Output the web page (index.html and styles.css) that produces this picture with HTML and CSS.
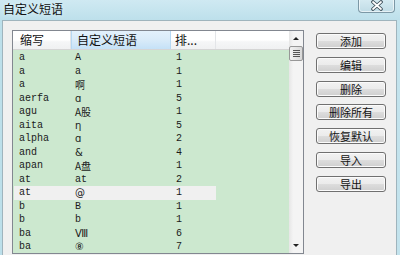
FILE: index.html
```html
<!DOCTYPE html>
<html lang="zh">
<head>
<meta charset="utf-8">
<title>自定义短语</title>
<link rel="stylesheet" href="styles.css">
</head>
<body>
<div class="window">
  <div class="titlebar">
    <span class="title">自定义短语</span>
    <div class="close">
      <svg width="14" height="11" viewBox="0 0 14 11">
        <path d="M3 2 L11 9 M11 2 L3 9" stroke="#3a4a55" stroke-width="3.6" stroke-linecap="round"/>
        <path d="M3 2 L11 9 M11 2 L3 9" stroke="#ffffff" stroke-width="1.8" stroke-linecap="round"/>
      </svg>
    </div>
  </div>
  <div class="body">
    <div class="list">
      <div class="table">
        <div class="header">
          <div class="hcell c1">缩写</div>
          <div class="hcell c2 hover">自定义短语</div>
          <div class="hcell c3">排...</div>
          <div class="hcell rest"></div>
        </div>
        <div class="rows">
          <div class="row"><span class="c1">a</span><span class="c2">A</span><span class="c3">1</span></div>
          <div class="row"><span class="c1">a</span><span class="c2">a</span><span class="c3">1</span></div>
          <div class="row"><span class="c1">a</span><span class="c2 cjk">啊</span><span class="c3">1</span></div>
          <div class="row"><span class="c1">aerfa</span><span class="c2 sym">ɑ</span><span class="c3">5</span></div>
          <div class="row"><span class="c1">agu</span><span class="c2 cjk">A股</span><span class="c3">1</span></div>
          <div class="row"><span class="c1">aita</span><span class="c2 sym">η</span><span class="c3">5</span></div>
          <div class="row"><span class="c1">alpha</span><span class="c2 sym">ɑ</span><span class="c3">2</span></div>
          <div class="row"><span class="c1">and</span><span class="c2 sym">&amp;</span><span class="c3">4</span></div>
          <div class="row"><span class="c1">apan</span><span class="c2 cjk">A盘</span><span class="c3">1</span></div>
          <div class="row"><span class="c1">at</span><span class="c2">at</span><span class="c3">2</span></div>
          <div class="row selected"><span class="c1">at</span><span class="c2 sym">@</span><span class="c3">1</span></div>
          <div class="row"><span class="c1">b</span><span class="c2">B</span><span class="c3">1</span></div>
          <div class="row"><span class="c1">b</span><span class="c2">b</span><span class="c3">1</span></div>
          <div class="row"><span class="c1">ba</span><span class="c2 sym">Ⅷ</span><span class="c3">6</span></div>
          <div class="row"><span class="c1">ba</span><span class="c2 sym">⑧</span><span class="c3">7</span></div>
        </div>
      </div>
      <div class="scrollbar">
        <div class="sbtn"><span class="arrow up"></span></div>
        <div class="track">
          <div class="thumb"><i></i><i></i><i></i><i></i></div>
        </div>
        <div class="sbtn"><span class="arrow down"></span></div>
      </div>
    </div>
    <div class="buttons">
      <button class="btn">添加</button>
      <button class="btn">编辑</button>
      <button class="btn">删除</button>
      <button class="btn">删除所有</button>
      <button class="btn">恢复默认</button>
      <button class="btn">导入</button>
      <button class="btn">导出</button>
    </div>
  </div>
</div>
</body>
</html>
```
FILE: styles.css
```css
html, body {
  margin: 0;
  padding: 0;
  width: 400px;
  height: 255px;
  overflow: hidden;
  background: #c4e2ec;
}
.window {
  width: 400px;
  height: 255px;
  display: flex;
  flex-direction: column;
  font-family: "Noto Sans CJK SC", "Liberation Sans", sans-serif;
  background: linear-gradient(90deg, #bcdfea 0%, #cde8f1 40%, #c3e3ed 100%);
}
.titlebar {
  height: 20px;
  flex: none;
  display: flex;
  align-items: flex-start;
  justify-content: space-between;
  background: linear-gradient(180deg, #cfe9f2 0%, #bde0eb 100%);
}
.title {
  font-size: 12px;
  line-height: 12px;
  margin: 3px 0 0 3px;
  color: #111;
  text-shadow: 0 0 4px #e8f6fb;
}
.close {
  width: 37px;
  height: 14px;
  margin: -1px 5px 0 0;
  box-sizing: border-box;
  border: 1px solid #7c98a6;
  border-top: none;
  border-radius: 0 0 4px 4px;
  background: linear-gradient(180deg, #d6ebf2 0%, #c0dce6 100%);
  display: flex;
  align-items: center;
  justify-content: center;
  box-shadow: inset 0 0 0 1px rgba(255,255,255,0.6);
}
.body {
  flex: 1;
  margin-left: 2px;
  margin-right: 3px;
  border-left: 1px solid #9fb4bd;
  border-top: 1px solid #9fb4bd;
  border-right: 1px solid #9fb4bd;
  background: #f0f0f0;
  display: flex;
  align-items: flex-start;
  padding: 9px 0 0 9px;
}
.list {
  width: 290px;
  height: 222px;
  border: 1px solid #828790;
  display: flex;
  background: #cce8cf;
  flex: none;
}
.table {
  flex: 1;
  display: flex;
  flex-direction: column;
}
.header {
  height: 18px;
  display: flex;
  background: linear-gradient(180deg, #ffffff 0%, #ffffff 50%, #f5f6f7 60%, #f0f1f2 100%);
  border-bottom: 1px solid #d5d5d5;
  font-size: 12px;
  color: #111;
}
.hcell {
  box-sizing: border-box;
  line-height: 18px;
  border-right: 1px solid #e3e5e8;
  white-space: nowrap;
}
.hcell.c1 { width: 58px; padding-left: 7px; }
.hcell.c2 { width: 100px; padding-left: 5px; }
.hcell.c3 { width: 45px; padding-left: 4px; }
.hcell.rest { flex: 1; border-right: none; }
.hcell.hover {
  background: linear-gradient(180deg, #e3f1fc 0%, #d9ebf9 50%, #c5e1f7 100%);
  border-left: 1px solid #b6d8f3;
  border-right: 1px solid #b6d8f3;
}
.rows {
  padding-top: 1px;
  display: flex;
  flex-direction: column;
}
.row {
  width: 202px;
  height: 13.5px;
  display: flex;
  align-items: center;
  font-family: "Liberation Mono", "DejaVu Sans Mono", monospace;
  font-size: 10px;
  color: #1a1a1a;
  margin-left: 1px;
}
.row.selected { background: #f0f0f0; }
.row .c1 { width: 57px; padding-left: 5px; box-sizing: border-box; }
.row .c2 { width: 100px; padding-left: 4px; box-sizing: border-box; }
.row .c3 { width: 44px; padding-left: 5px; box-sizing: border-box; }
.row .cjk {
  font-family: "Noto Sans CJK SC", sans-serif;
  font-size: 10px;
}
.row .sym {
  font-family: "DejaVu Sans", sans-serif;
  font-size: 10px;
}
.scrollbar {
  width: 14px;
  flex: none;
  display: flex;
  flex-direction: column;
  background: linear-gradient(90deg, #e6e6e6 0%, #f4f4f4 30%, #f4f4f4 100%);
}
.sbtn {
  height: 15px;
  display: flex;
  align-items: center;
  justify-content: center;
}
.arrow {
  width: 0;
  height: 0;
  border-left: 3px solid transparent;
  border-right: 3px solid transparent;
}
.arrow.up { border-bottom: 3px solid #222; }
.arrow.down { border-top: 3px solid #222; }
.track {
  flex: 1;
}
.thumb {
  height: 15px;
  box-sizing: border-box;
  border: 1px solid #979797;
  border-radius: 2px;
  background: linear-gradient(90deg, #f2f2f2 0%, #e6e6e6 50%, #d8d8d8 100%);
  display: flex;
  flex-direction: column;
  align-items: center;
  justify-content: center;
  gap: 1px;
}
.thumb i {
  display: block;
  width: 7px;
  height: 1px;
  background: #555;
}
.buttons {
  display: flex;
  flex-direction: column;
  gap: 7.8px;
  margin: 3px 0 0 12px;
}
.btn {
  width: 70px;
  height: 16px;
  padding: 0;
  margin: 0;
  box-sizing: border-box;
  border: 1px solid #707070;
  border-radius: 3px;
  background: linear-gradient(180deg, #f2f2f2 0%, #ebebeb 50%, #dddddd 51%, #cfcfcf 100%);
  box-shadow: inset 0 0 0 1px #fbfbfb;
  font-family: "Noto Sans CJK SC", sans-serif;
  font-size: 11px;
  line-height: 14px;
  color: #111;
}
```
